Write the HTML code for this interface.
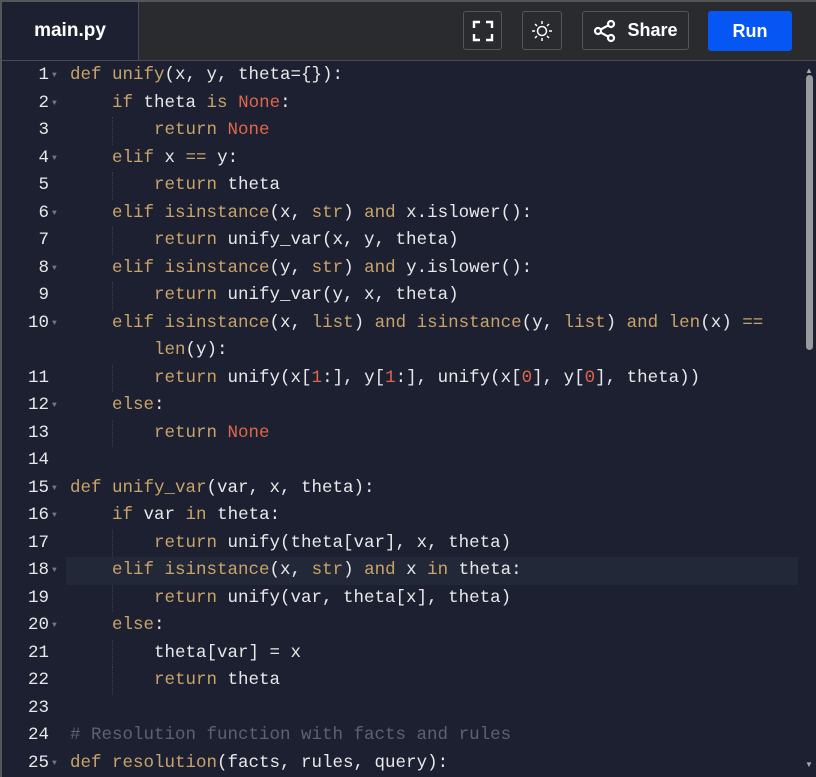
<!DOCTYPE html>
<html><head><meta charset="utf-8"><style>
*{margin:0;padding:0;box-sizing:border-box}
body{width:816px;height:777px;overflow:hidden;background:#1c2030;font-family:"Liberation Sans",sans-serif;position:relative}
.top{position:absolute;left:0;top:0;width:816px;height:61px;background:#2a2b2f;border-top:2px solid #55565a;border-bottom:1px solid #4a4b50}
.tab{position:absolute;left:2px;top:2px;width:137px;height:58px;background:#1c2030;color:#fff;font-weight:bold;font-size:19px;line-height:58px;text-align:center;border-right:1px solid #4a4b50}
.btn{position:absolute;top:11px;height:39px;border:1px solid #55565a;border-radius:3px;display:flex;align-items:center;justify-content:center;color:#fff}
.run{position:absolute;left:708px;top:11px;width:84px;height:40px;background:#0556f3;border-radius:3px;color:#fff;font-weight:bold;font-size:18px;line-height:40px;text-align:center}
.lb{position:absolute;left:0;top:0;width:2px;height:777px;background:#55565a}
.code{position:absolute;left:0;top:62px;width:800px;font-family:"Liberation Mono",monospace;font-size:17.5px;color:#e8e8e8}
.r{height:27.5px;line-height:27.5px;position:relative;white-space:pre}
.n{position:absolute;left:0;width:49px;text-align:right;color:#e8e8e8}
.f{position:absolute;left:52px;top:0;font-size:8px;color:#777}
.t{position:absolute;left:70px}
.k{color:#c9a46a}.c{color:#5d6270}.v{color:#e0674b}
.hl{background:#232838}
.g{position:absolute;left:112px;width:0;height:27.5px;border-left:1px dotted #3a3f4c}
.sb{position:absolute;left:806px;top:75px;width:7px;height:275px;background:#9a9b9e;border-radius:4px}
</style></head><body>
<div class="top"></div>
<div class="lb"></div>
<div class="tab">main.py</div>
<div class="btn" style="left:463px;width:39px"><svg width="22" height="22" viewBox="0 0 22 22" fill="none" stroke="#fff" stroke-width="2.4"><path d="M2 8V2h6M14 2h6v6M20 14v6h-6M8 20H2v-6"/></svg></div>
<div class="btn" style="left:522px;width:40px"><svg width="22" height="22" viewBox="0 0 22 22" fill="none" stroke="#fff" stroke-width="1.5"><circle cx="11" cy="11" r="4.5"/><path d="M11 1v3M11 18v3M1 11h3M18 11h3M4 4l2 2M16 16l2 2M4 18l2-2M16 6l2-2"/></svg></div>
<div class="btn" style="left:582px;width:107px;font-weight:bold;font-size:18px"><svg width="24" height="24" viewBox="0 0 24 24" fill="none" stroke="#fff" stroke-width="2.2" style="margin-right:10px"><circle cx="18" cy="5" r="3"/><circle cx="5" cy="12" r="3"/><circle cx="18" cy="19" r="3"/><path d="M7.6 10.5l7.8-4.2M7.6 13.5l7.8 4.2"/></svg>Share</div>
<div class="run">Run</div>
<div class="code">
<div class="r"><span class="n">1</span><span class="f">▼</span><span class="t"><span class="k">def unify</span>(x, y, theta={}):</span></div>
<div class="r"><span class="n">2</span><span class="f">▼</span><span class="t">    <span class="k">if</span> theta <span class="k">is</span> <span class="v">None</span>:</span></div>
<div class="r"><span class="n">3</span><span class="g"></span><span class="t">        <span class="k">return</span> <span class="v">None</span></span></div>
<div class="r"><span class="n">4</span><span class="f">▼</span><span class="t">    <span class="k">elif</span> x <span class="k">==</span> y:</span></div>
<div class="r"><span class="n">5</span><span class="g"></span><span class="t">        <span class="k">return</span> theta</span></div>
<div class="r"><span class="n">6</span><span class="f">▼</span><span class="t">    <span class="k">elif isinstance</span>(x, <span class="k">str</span>) <span class="k">and</span> x.islower():</span></div>
<div class="r"><span class="n">7</span><span class="g"></span><span class="t">        <span class="k">return</span> unify_var(x, y, theta)</span></div>
<div class="r"><span class="n">8</span><span class="f">▼</span><span class="t">    <span class="k">elif isinstance</span>(y, <span class="k">str</span>) <span class="k">and</span> y.islower():</span></div>
<div class="r"><span class="n">9</span><span class="g"></span><span class="t">        <span class="k">return</span> unify_var(y, x, theta)</span></div>
<div class="r"><span class="n">10</span><span class="f">▼</span><span class="t">    <span class="k">elif isinstance</span>(x, <span class="k">list</span>) <span class="k">and isinstance</span>(y, <span class="k">list</span>) <span class="k">and len</span>(x) <span class="k">==</span></span></div>
<div class="r"><span class="t">        <span class="k">len</span>(y):</span></div>
<div class="r"><span class="n">11</span><span class="g"></span><span class="t">        <span class="k">return</span> unify(x[<span class="v">1</span>:], y[<span class="v">1</span>:], unify(x[<span class="v">0</span>], y[<span class="v">0</span>], theta))</span></div>
<div class="r"><span class="n">12</span><span class="f">▼</span><span class="t">    <span class="k">else</span>:</span></div>
<div class="r"><span class="n">13</span><span class="g"></span><span class="t">        <span class="k">return</span> <span class="v">None</span></span></div>
<div class="r"><span class="n">14</span></div>
<div class="r"><span class="n">15</span><span class="f">▼</span><span class="t"><span class="k">def unify_var</span>(var, x, theta):</span></div>
<div class="r"><span class="n">16</span><span class="f">▼</span><span class="t">    <span class="k">if</span> var <span class="k">in</span> theta:</span></div>
<div class="r"><span class="n">17</span><span class="g"></span><span class="t">        <span class="k">return</span> unify(theta[var], x, theta)</span></div>
<div class="r"><span class="n">18</span><span class="f">▼</span><span class="hl" style="position:absolute;left:66px;width:732px;height:27.5px"></span><span class="t">    <span class="k">elif isinstance</span>(x, <span class="k">str</span>) <span class="k">and</span> x <span class="k">in</span> theta:</span></div>
<div class="r"><span class="n">19</span><span class="g"></span><span class="t">        <span class="k">return</span> unify(var, theta[x], theta)</span></div>
<div class="r"><span class="n">20</span><span class="f">▼</span><span class="t">    <span class="k">else</span>:</span></div>
<div class="r"><span class="n">21</span><span class="g"></span><span class="t">        theta[var] = x</span></div>
<div class="r"><span class="n">22</span><span class="g"></span><span class="t">        <span class="k">return</span> theta</span></div>
<div class="r"><span class="n">23</span></div>
<div class="r"><span class="n">24</span><span class="t c"># Resolution function with facts and rules</span></div>
<div class="r"><span class="n">25</span><span class="f">▼</span><span class="t"><span class="k">def resolution</span>(facts, rules, query):</span></div>
</div>
<div style="position:absolute;left:805px;top:66px;font-size:8px;color:#aaa">▲</div>
<div class="sb"></div>
<div style="position:absolute;left:805px;top:760px;font-size:8px;color:#aaa">▼</div>
</body></html>
